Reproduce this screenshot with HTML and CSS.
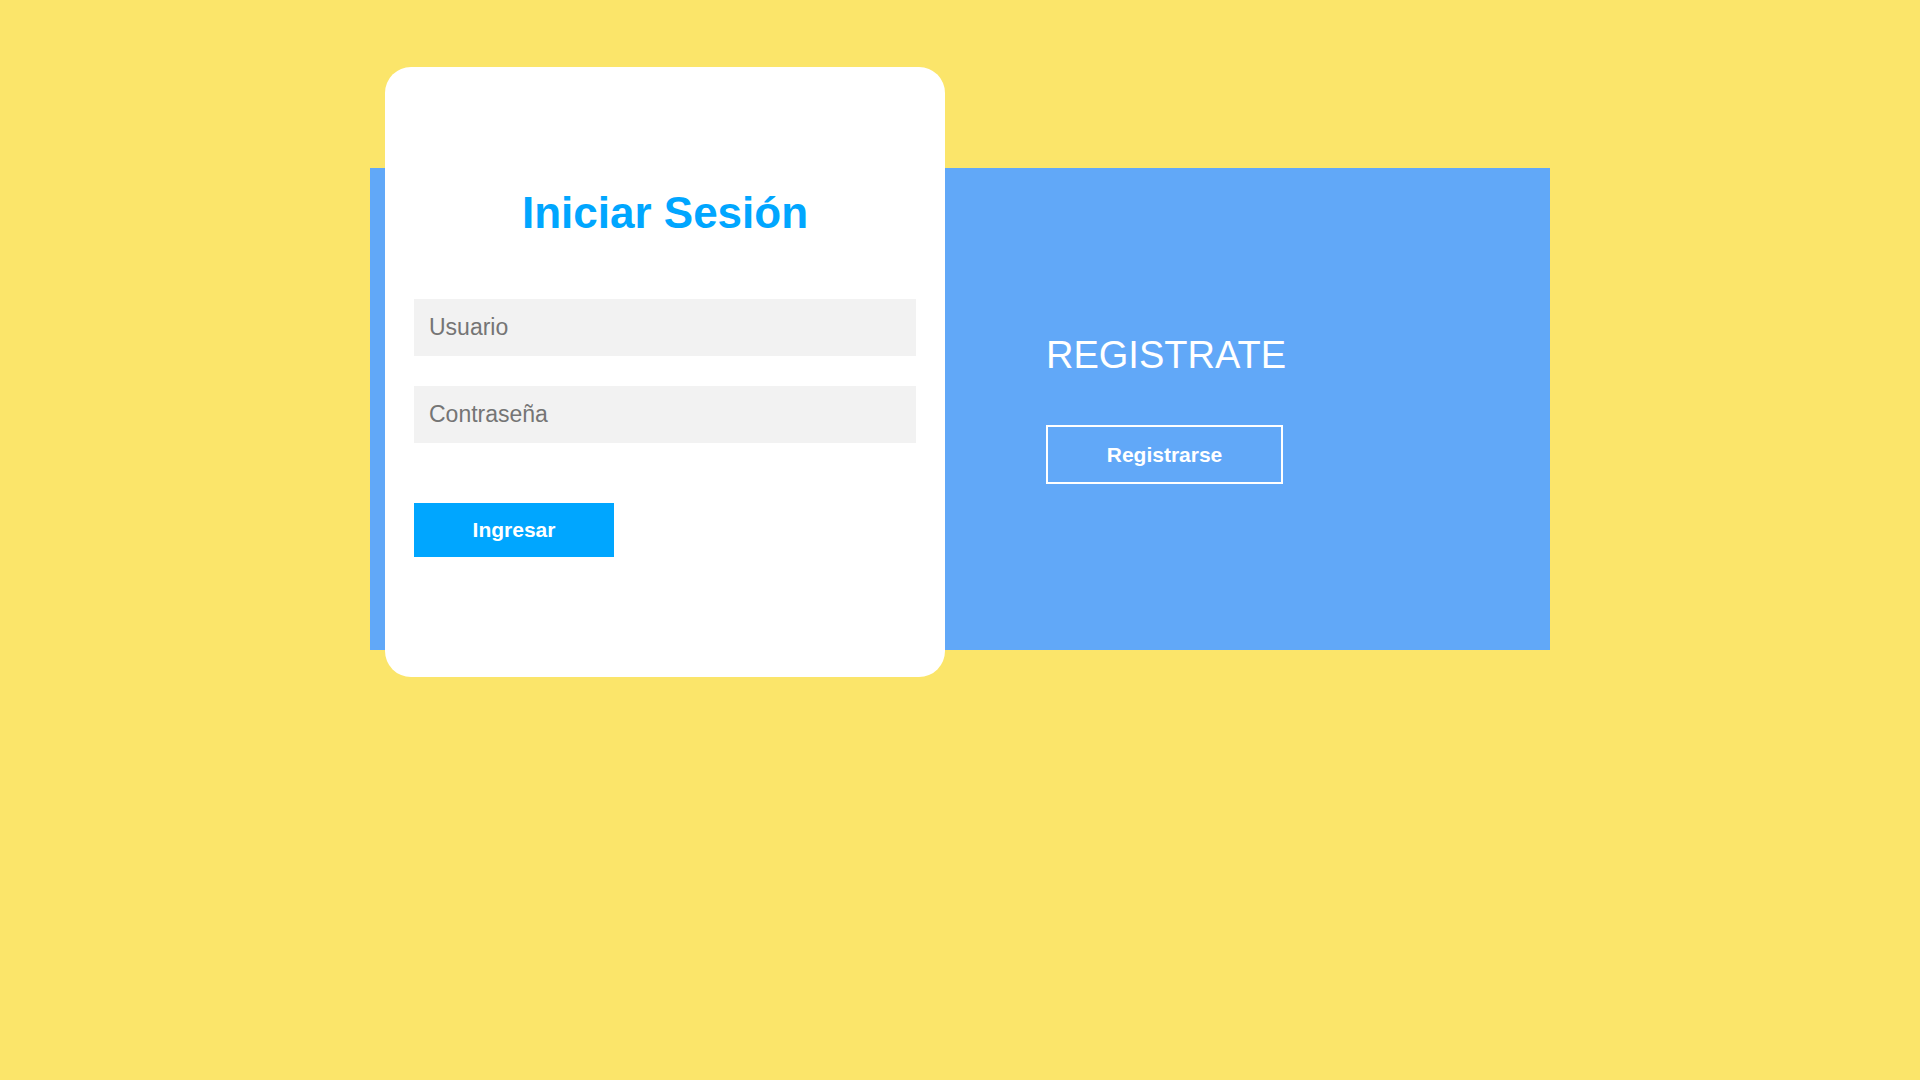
FILE: index.html
```html
<!DOCTYPE html>
<html lang="es">
<head>
<meta charset="utf-8">
<title>Iniciar Sesión</title>
<link rel="stylesheet" href="styles.css">
</head>
<body>
<main class="page">
  <section class="panel">
    <div class="card">
      <h1 class="title">Iniciar Sesión</h1>
      <form class="form">
        <input class="field" type="text" placeholder="Usuario">
        <input class="field" type="password" placeholder="Contraseña">
        <button class="btn-primary" type="button">Ingresar</button>
      </form>
    </div>
    <div class="promo">
      <h2 class="promo-title">REGISTRATE</h2>
      <button class="btn-outline" type="button">Registrarse</button>
    </div>
  </section>
</main>
</body>
</html>
```
FILE: styles.css
```css
html, body {
  margin: 0;
  padding: 0;
}
body {
  background: #fbe56a;
  font-family: "Liberation Sans", Arial, sans-serif;
  min-height: 1080px;
}
.page {
  padding-top: 168px;
}
.panel {
  width: 1180px;
  height: 482px;
  margin: 0 auto;
  background: #61a8f8;
  display: flex;
  align-items: flex-start;
  padding-left: 15px;
  box-sizing: border-box;
}
.card {
  width: 560px;
  height: 610px;
  flex: none;
  margin-top: -101px;
  background: #ffffff;
  border-radius: 26px;
  padding: 0 29px;
  box-sizing: border-box;
  display: flex;
  flex-direction: column;
  justify-content: center;
}
.title {
  margin: 0 0 60px;
  font-size: 44px;
  line-height: 52px;
  font-weight: bold;
  color: #00a6ff;
  text-align: center;
}
.form {
  display: flex;
  flex-direction: column;
  align-items: flex-start;
  margin: 0;
}
.field {
  width: 100%;
  height: 57px;
  border: none;
  outline: none;
  background: #f2f2f2;
  font-family: inherit;
  font-size: 23px;
  color: #333;
  padding: 0 15px;
  box-sizing: border-box;
}
.field::placeholder {
  color: #757575;
}
.field + .field {
  margin-top: 30px;
}
.btn-primary {
  margin-top: 60px;
  width: 200px;
  height: 54px;
  border: none;
  background: #00a6ff;
  color: #ffffff;
  font-family: inherit;
  font-weight: bold;
  font-size: 21px;
  padding: 0;
  cursor: pointer;
}
.promo {
  flex: 1;
  align-self: stretch;
  display: flex;
  flex-direction: column;
  justify-content: center;
  align-items: flex-start;
  padding-left: 101px;
}
.promo-title {
  margin: 0;
  font-size: 38px;
  line-height: 42px;
  font-weight: normal;
  color: #ffffff;
}
.btn-outline {
  margin-top: 49px;
  width: 237px;
  height: 59px;
  border: 2px solid #ffffff;
  background: transparent;
  color: #ffffff;
  font-family: inherit;
  font-weight: bold;
  font-size: 21px;
  padding: 0;
  cursor: pointer;
}
```
